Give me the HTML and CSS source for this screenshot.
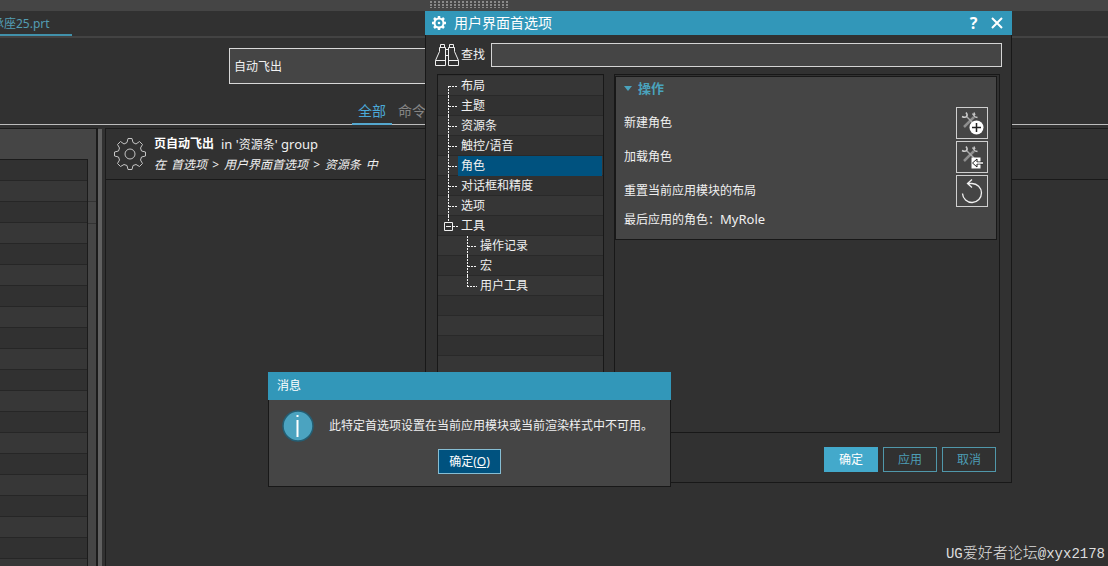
FILE: index.html
```html
<!DOCTYPE html>
<html lang="zh-CN">
<head>
<meta charset="utf-8">
<title>用户界面首选项</title>
<link rel="stylesheet" href="styles.css">
</head>
<body>
<svg class="defs" aria-hidden="true">
  <symbol id="branch-first" viewBox="0 0 20 20"><path d="M10.500 10V20M11 10.500H20" class="dots"/></symbol>
  <symbol id="branch-mid" viewBox="0 0 20 20"><path d="M10.500 0V20M11 10.500H20" class="dots"/></symbol>
  <symbol id="branch-last" viewBox="0 0 20 20"><path d="M10.500 0V10M10 10.500H20" class="dots"/></symbol>
  <symbol id="branch-open" viewBox="0 0 20 20"><path d="M10.500 0V6M15 10.500H20" class="dots"/><path d="M6.500 6.500H14.500V14.500H6.500ZM8 10.500H13" class="solid"/></symbol>
  <symbol id="tools" viewBox="0 0 30 30">
    <path d="M7 19 17 9" stroke="#8e8e8e" stroke-width="2.500" fill="none"/>
    <path d="M9 8 17 16" stroke="#aaa" stroke-width="1.500" fill="none"/>
    <path d="M5 8.500Q8 10 9.500 8.500T9 4.500" stroke="#ccc" stroke-width="1.500" fill="none"/>
    <path d="M15.500 5.500 18 9 20.500 9.500M17 4.500 18 7" stroke="#c4c4c4" stroke-width="1.300" fill="none"/>
  </symbol>
</svg>

<div class="app">
  <div class="topbar"><span class="grip"></span></div>
  <nav class="filetabs"><a class="filetab" href="#">承座25.prt</a></nav>
  <header class="finder">
    <div class="finder-inner">
      <input class="finder-input" type="text" value="自动飞出" aria-label="命令查找">
      <div class="scopes">
        <button class="scope scope-on" type="button">全部</button>
        <button class="scope" type="button">命令</button>
      </div>
    </div>
  </header>
  <div class="workspace">
    <aside class="side"><div class="side-list"></div><div class="side-gutter"></div></aside>
    <div class="splitter"></div>
    <main class="results">
      <article class="result">
        <svg class="result-icon" viewBox="0 0 34 34" aria-hidden="true">
          <path d="M14 5.500 15 1.500H19L20 5.500 23 7 26.500 4.500 29.500 7.500 27.500 11 28.500 14 32.500 15V19L28.500 20 27.500 23 29.500 26.500 26.500 29.500 23 27.500 20 28.500 19 32.500H15L14 28.500 11 27.500 7.500 29.500 4.500 26.500 6.500 23 5.500 20 1.500 19V15L5.500 14 6.500 11 4.500 7.500 7.500 4.500 11 7Z"/>
          <circle cx="17" cy="17" r="5"/>
        </svg>
        <div class="result-text">
          <p class="result-title"><b>页自动飞出</b><span><span class="latin">in '</span>资源条<span class="latin">' group</span></span></p>
          <p class="result-path"><span>在</span><span>首选项</span><span>&gt;</span><span>用户界面首选项</span><span>&gt;</span><span>资源条</span><span>中</span></p>
        </div>
      </article>
    </main>
  </div>
</div>

<section class="window prefs" role="dialog" aria-labelledby="prefs-title">
  <div class="prefs-bar">
    <svg class="bar-gear" viewBox="0 0 14 14" aria-hidden="true"><circle cx="7" cy="7" r="4.500" fill="none" stroke="#fff" stroke-width="2"/><path d="M7 0V2M7 12V14M0 7H2M12 7H14M2 2 4 4M10 10 12 12M12 2 10 4M4 10 2 12" stroke="#fff" stroke-width="2.500"/><circle cx="7" cy="7" r="1.300" fill="#fff"/></svg>
    <h1 class="prefs-title" id="prefs-title">用户界面首选项</h1>
    <button class="bar-button" type="button" aria-label="帮助">?</button>
    <button class="bar-button" type="button" aria-label="关闭"><svg width="12" height="12" viewBox="0 0 12 12"><path d="M1 1 11 11M11 1 1 11" stroke="#fff" stroke-width="2"/></svg></button>
  </div>
  <div class="search">
    <svg class="binoculars" viewBox="0 0 24 24" aria-hidden="true"><path d="M5.500 4.500V1.500H9.500V4.500M14.500 4.500V1.500H18.500V4.500M4.500 4.500H10.500V22.500H.5V17.500L4.500 8.500ZM13.500 4.500H19.500V8.500L23.500 17.500V22.500H13.500ZM.5 17.500H10.500M13.500 17.500H23.500M10.500 6.500H13.500M10.500 12.500H13.500"/></svg>
    <label class="search-label" for="find">查找</label>
    <input class="search-input" id="find" type="text">
  </div>
  <div class="panes">
    <ul class="tree">
      <li class="node"><svg class="branch"><use href="#branch-first"/></svg><span class="node-name">布局</span></li>
      <li class="node"><svg class="branch"><use href="#branch-mid"/></svg><span class="node-name">主题</span></li>
      <li class="node"><svg class="branch"><use href="#branch-mid"/></svg><span class="node-name">资源条</span></li>
      <li class="node"><svg class="branch"><use href="#branch-mid"/></svg><span class="node-name">触控/语音</span></li>
      <li class="node"><svg class="branch"><use href="#branch-mid"/></svg><span class="node-name node-on">角色</span></li>
      <li class="node"><svg class="branch"><use href="#branch-mid"/></svg><span class="node-name">对话框和精度</span></li>
      <li class="node"><svg class="branch"><use href="#branch-mid"/></svg><span class="node-name">选项</span></li>
      <li class="node"><svg class="branch"><use href="#branch-open"/></svg><span class="node-name">工具</span></li>
      <li class="node node-sub"><svg class="branch"><use href="#branch-mid"/></svg><span class="node-name">操作记录</span></li>
      <li class="node node-sub"><svg class="branch"><use href="#branch-mid"/></svg><span class="node-name">宏</span></li>
      <li class="node node-sub"><svg class="branch"><use href="#branch-last"/></svg><span class="node-name">用户工具</span></li>
    </ul>
    <div class="detail">
      <div class="group">
        <h2 class="group-title"><svg width="8" height="5" viewBox="0 0 8 5" aria-hidden="true"><path d="M0 0H8L4 5Z" fill="#4aa3bd"/></svg>操作</h2>
        <div class="action"><span>新建角色</span>
          <button class="tool" type="button" aria-label="新建角色"><svg viewBox="0 0 30 30"><use href="#tools"/><circle cx="19.500" cy="19.500" r="7" fill="#fff"/><path d="M19.500 15V24M15 19.500H24" stroke="#222" stroke-width="1.500"/></svg></button></div>
        <div class="action"><span>加载角色</span>
          <button class="tool" type="button" aria-label="加载角色"><svg viewBox="0 0 30 30"><use href="#tools"/><path d="M14.500 15.500H23.500V26.500H14.500Z" fill="#fff"/><path d="M26 20H20V17L15.500 21 20 25V22H26" fill="#fff" stroke="#222"/><path d="M26 21H18" stroke="#fff"/></svg></button></div>
        <div class="action"><span>重置当前应用模块的布局</span>
          <button class="tool" type="button" aria-label="重置布局"><svg viewBox="0 0 30 30"><path d="M5.500 17.500A9.500 9.500 0 1 0 15 7.500H10.500M15 3.500 10.500 7.500 15 11.500" fill="none" stroke="#f0f0f0" stroke-width="1.300"/></svg></button></div>
        <p class="last-role">最后应用的角色：<span class="latin">MyRole</span></p>
      </div>
    </div>
  </div>
  <div class="actions">
    <button class="button button-main" type="button">确定</button>
    <button class="button" type="button">应用</button>
    <button class="button" type="button">取消</button>
  </div>
</section>

<section class="window message" role="alertdialog" aria-labelledby="message-title">
  <h2 class="message-title" id="message-title">消息</h2>
  <div class="message-body">
    <svg class="info" viewBox="0 0 32 32" aria-hidden="true"><circle cx="16" cy="16" r="15" fill="#4ba3c0" stroke="#245e73" stroke-width="1.500"/><path d="M15.500 10V27M15.500 5V7" stroke="#fff" stroke-width="2"/></svg>
    <p class="message-text">此特定首选项设置在当前应用模块或当前渲染样式中不可用。</p>
  </div>
  <button class="message-ok" type="button">确定(<u>O</u>)</button>
</section>

<div class="watermark">UG<span class="watermark-cn">爱好者论坛</span>@xyx2178</div>
</body>
</html>
```

FILE: styles.css
```css
* { box-sizing: border-box; }

body {
  margin: 0;
  background: #313131;
  color: #f0f0f0;
  font: 12px/20px "Noto Sans", "Noto Sans CJK SC", sans-serif;
  overflow: hidden;
}

h1, h2, p, ul { margin: 0; padding: 0; }
button, input { font: inherit; color: inherit; border-radius: 0; }
button { padding: 0; border: 0; background: none; }
svg { display: block; flex: none; }
.defs { display: none; }
.dots { fill: none; stroke: #f4f4f4; stroke-dasharray: 2 1; }
.solid { fill: none; stroke: #f0f0f0; }
.latin { font-size: 13px; }

.app { display: flex; flex-direction: column; height: 100vh; }

.topbar { height: 11px; flex: none; padding: 1px 0 0 430px; background: #454545; }
.grip {
  display: block;
  width: 79px;
  height: 7px;
  background: radial-gradient(circle at 1px 1px, #8a8a8a 1px, transparent 1px) 0 0 / 4px 3px;
}

.filetabs { display: flex; flex: none; height: 27px; border-bottom: 2px solid #434343; }
.filetab {
  width: 80px;
  height: 25px;
  margin-left: -8px;
  padding-top: 3px;
  border-bottom: 2px solid #4191ab;
  color: #539db3;
  text-decoration: none;
  white-space: nowrap;
}

.finder { flex: none; height: 87px; padding-top: 10px; border-bottom: 1px solid #bcbcbc; }
.finder-inner { width: 650px; max-width: 100%; margin: 0 auto; }
.finder-input {
  display: block;
  width: 100%;
  height: 36px;
  padding: 0 4px;
  border: 1px solid #d8d8d8;
  background: #454545;
}
.scopes { display: flex; padding: 14px 0 0 123px; }
.scope { height: 27px; padding: 0 6px; border-bottom: 2px solid transparent; color: #858585; font-size: 14px; }
.scope-on { border-bottom-color: #55a8cf; color: #4ba9d8; }

.workspace { display: flex; flex: 1; min-height: 0; padding-top: 3px; }
.side { display: flex; width: 98px; padding-top: 30px; border: solid #1b1b1b; border-width: 1px 2px 0 0; background: #454545; }
.side-list {
  width: 88px;
  border: solid #1b1b1b;
  border-width: 1px 1px 0 0;
  background: repeating-linear-gradient(#313131 0 20px, #262626 20px 21px, #373737 21px 41px, #262626 41px 42px);
}
.side-gutter {
  width: 8px;
  height: 85px;
  background: repeating-linear-gradient(transparent 0 21px, #333 21px 22px) 0 21px / 8px 64px no-repeat;
}
.splitter { width: 4px; margin-top: 1px; background: #606060; }
.results { flex: 1; margin-left: 3px; border: solid #1b1b1b; border-width: 1px 0 0 1px; }
.result { display: flex; gap: 7px; height: 51px; padding: 5px 7px; border-bottom: 1px solid #191919; }
.result-icon { width: 34px; height: 34px; margin-top: 3px; fill: none; stroke: #c4c4c4; }
.result-text { white-space: nowrap; }
.result-title { display: flex; gap: 7px; }
.result-title b { color: #fff; }
.result-path { display: flex; gap: 5px; font-style: italic; }

.window { position: absolute; border: 1px solid #181818; border-top: 0; }

.prefs { left: 425px; top: 11px; width: 587px; background: #313131; }
.prefs-bar { display: flex; align-items: center; gap: 10px; height: 24px; margin: 0 -1px; padding: 0 9px 0 7px; background: #3297b9; }
.bar-gear { width: 14px; height: 14px; }
.prefs-title { flex: 1; margin-left: -2px; color: #fff; font-size: 14px; font-weight: 400; line-height: 24px; }
.bar-button { display: grid; place-items: center; min-width: 13px; color: #fff; font-size: 16px; font-weight: 700; line-height: 24px; }

.search { display: flex; align-items: center; height: 39px; padding: 0 9px; }
.binoculars { width: 24px; height: 24px; fill: none; stroke: #f0f0f0; }
.search-label { margin: 0 6px 0 2px; }
.search-input { flex: 1; min-width: 0; height: 24px; padding: 0 4px; border: 1px solid #d4d4d4; background: #454545; }

.panes { display: flex; gap: 10px; height: 359px; padding: 0 11px; }
.tree {
  width: 167px;
  padding-top: 1px;
  list-style: none;
  border: 1px solid #181818;
  background: repeating-linear-gradient(#363636 0 20px, #292929 20px 21px, #313131 21px 40px, #363636 40px) content-box;
  background: repeating-linear-gradient(#363636 0 19px, #292929 19px 20px, #313131 20px 39px, #292929 39px 40px) content-box;
}
.node { display: flex; height: 20px; }
.node-sub { padding-left: 19px; }
.branch { width: 20px; height: 20px; }
.node-name { flex: 1; padding-left: 3px; }
.node-on { margin-right: 1px; background: #00527f; }

.detail { flex: 1; padding: 1px; border: 1px solid #181818; }
.group { border: 1px solid #181818; margin: 0 1px 0 -1px; padding: 1px 8px 8px; background: #454545; }
.group-title { display: flex; align-items: center; gap: 6px; height: 28px; padding-bottom: 8px; color: #4aa3bd; font-size: 13px; line-height: 20px; }
.action { display: flex; align-items: center; justify-content: space-between; height: 34px; }
.tool { width: 32px; height: 32px; border: 1px solid #cfcfcf; }
.tool svg { width: 30px; height: 30px; }
.last-role { line-height: 22px; }

.actions { display: flex; justify-content: flex-end; gap: 5px; padding: 14px 15px 10px; }
.button { width: 54px; height: 25px; border: 1px solid #5097aa; color: #4d9db5; }
.button-main { border-color: #43a9cb; background: #43a9cb; color: #fff; }

.message { left: 268px; top: 372px; width: 403px; padding-bottom: 12px; background: #454545; }
.message-title { margin: 0 -1px; padding: 0 9px; background: #3297b9; color: #fff; font-size: 12px; font-weight: 400; line-height: 28px; }
.message-body { display: flex; align-items: center; gap: 15px; height: 49px; padding: 3px 13px 0; }
.info { width: 32px; height: 32px; }
.message-ok { display: block; width: 63px; height: 25px; margin: 0 auto; border: 1px solid #86bdd3; background: #00527f; color: #fff; }

.watermark { position: absolute; right: 3px; bottom: 0; color: #dedede; font: 14px/24px "Liberation Mono", "Noto Sans CJK SC", monospace; }
.watermark-cn { font-family: "Noto Sans CJK SC", sans-serif; font-size: 15px; font-weight: 300; }
```
